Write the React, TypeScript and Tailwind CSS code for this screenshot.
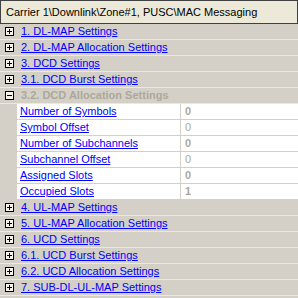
import React from 'react';

type Sub = { label: string; value: string; bold: boolean };

const BEFORE = ['1. DL-MAP Settings', '2. DL-MAP Allocation Settings', '3. DCD Settings', '3.1. DCD Burst Settings'];
const AFTER = [
  '4. UL-MAP Settings',
  '5. UL-MAP Allocation Settings',
  '6. UCD Settings',
  '6.1. UCD Burst Settings',
  '6.2. UCD Allocation Settings',
  '7. SUB-DL-UL-MAP Settings',
];

const SUBS: Sub[] = [
  { label: 'Number of Symbols', value: '0', bold: true },
  { label: 'Symbol Offset', value: '0', bold: false },
  { label: 'Number of Subchannels', value: '0', bold: true },
  { label: 'Subchannel Offset', value: '0', bold: false },
  { label: 'Assigned Slots', value: '0', bold: true },
  { label: 'Occupied Slots', value: '1', bold: true },
];

function Box({ open }: { open?: boolean }) {
  return (
    <svg width="9" height="9" viewBox="0 0 9 9" className="shrink-0">
      <rect x="0.5" y="0.5" width="8" height="8" fill="#f4f3ee" stroke="#000" />
      <path d="M2 4.5h5" stroke="#000" />
      {!open && <path d="M4.5 2v5" stroke="#000" />}
    </svg>
  );
}

function Section({ label }: { label: string }) {
  return (
    <div className="flex h-[16px] items-center border-b border-[#ece9d8] bg-[#d4d0c8]">
      <div className="flex w-[21px] shrink-0 pl-[5px]">
        <Box />
      </div>
      <a className="whitespace-nowrap text-[#0000ff] underline">{label}</a>
    </div>
  );
}

export default function App() {
  return (
    <div
      className="h-[298px] w-[298px] overflow-hidden bg-[#d4d0c8] text-[11px] leading-[15px]"
      style={{ fontFamily: '"Liberation Sans", Arial, sans-serif' }}
    >
      <div className="flex h-[24px] items-center whitespace-nowrap border border-[#404040] bg-[#ece9d8] pl-[5px] text-[11px] text-black">
        Carrier 1\Downlink\Zone#1, PUSC\MAC Messaging
      </div>
      {BEFORE.map((l) => (
        <Section key={l} label={l} />
      ))}
      <div className="flex h-[16px] items-center border-b border-[#ece9d8] bg-[#d4d0c8]">
        <div className="flex w-[21px] shrink-0 pl-[5px]">
          <Box open />
        </div>
        <span className="whitespace-nowrap font-bold text-[#aca899]">3.2. DCD Allocation Settings</span>
      </div>
      {SUBS.map((s) => (
        <div key={s.label} className="flex h-[16px]">
          <div className="w-[17px] shrink-0 bg-[#d4d0c8]" />
          <div className="flex flex-1 border-b border-[#d4d0c8] bg-white">
            <div className="flex w-[164px] shrink-0 items-center border-r border-[#d4d0c8] pl-[3px]">
              <a className="whitespace-nowrap text-[#0000ff] underline">{s.label}</a>
            </div>
            <div className={`flex items-center pl-[4px] text-[#aca899] ${s.bold ? 'font-bold' : ''}`}>{s.value}</div>
          </div>
        </div>
      ))}
      {AFTER.map((l) => (
        <Section key={l} label={l} />
      ))}
    </div>
  );
}
